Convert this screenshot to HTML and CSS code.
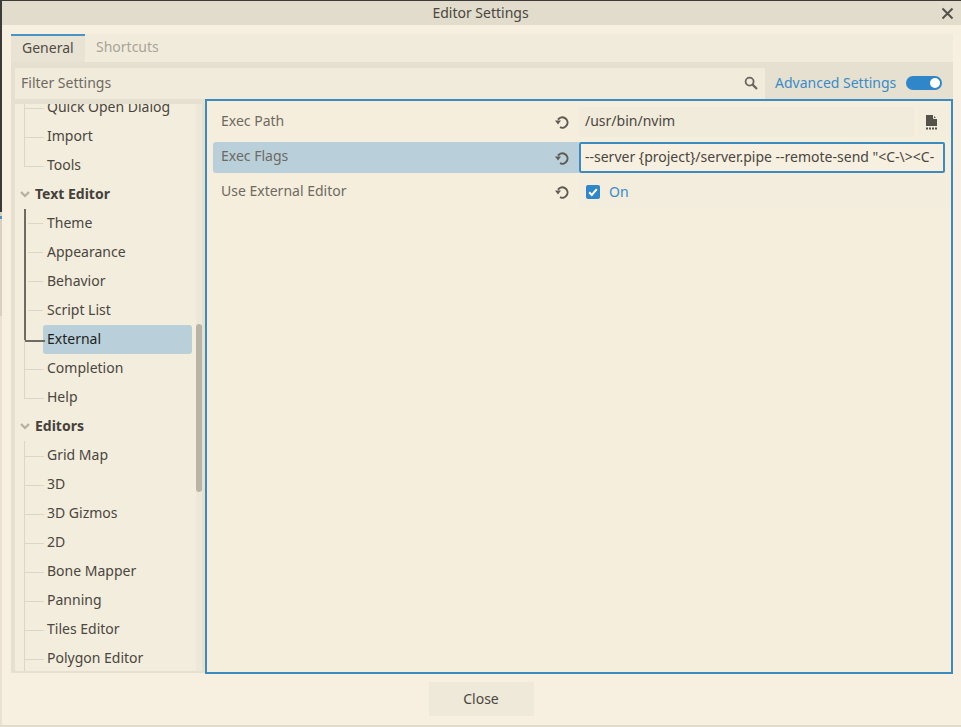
FILE: index.html
```html
<!DOCTYPE html>
<html>
  <head>
    <title>Editor Settings</title>
    <link rel="stylesheet" href="styles.css">
  </head>

  <body>
    <div class="window">
      <div class="titlebar">
        Editor Settings
        <svg class="close-x" width="13" height="13" viewBox="0 0 13 13">
          <path d="M1.5 1.5 L11.5 11.5 M11.5 1.5 L1.5 11.5" stroke="#55524c" stroke-width="2" fill="none" />
        </svg>
      </div>

      <div class="content">
        <div class="tabs">
          <div class="tab active">General</div>
          <div class="tab">Shortcuts</div>
        </div>

        <div class="panel">
          <div class="filter-row">
            <div class="filter-input">
              <span>Filter Settings</span>
              <svg width="14" height="14" viewBox="0 0 14 14">
                <circle cx="5.6" cy="5.6" r="4" stroke="#6a665e" stroke-width="1.8" fill="none" />
                <path d="M8.6 8.6 L13 13" stroke="#6a665e" stroke-width="2.2" fill="none" />
              </svg>
            </div>
            <div class="advanced">
              <span>Advanced Settings</span>
              <div class="toggle"><div class="knob"></div></div>
            </div>
          </div>

          <div class="split">
            <div class="tree-wrap">
              <div class="tree">
                <div class="tree-item">Quick Open Dialog</div>
                <div class="tree-item">Import</div>
                <div class="tree-item last">Tools</div>
                <div class="tree-head">
                  <svg width="10" height="7" viewBox="0 0 10 7"><path d="M1 1 L5 5 L9 1" stroke="#b5b0a3" stroke-width="2.2" fill="none" /></svg>
                  Text Editor
                </div>
                <div class="tree-item strong">Theme</div>
                <div class="tree-item strong">Appearance</div>
                <div class="tree-item strong">Behavior</div>
                <div class="tree-item strong">Script List</div>
                <div class="tree-item selected">External</div>
                <div class="tree-item">Completion</div>
                <div class="tree-item last">Help</div>
                <div class="tree-head">
                  <svg width="10" height="7" viewBox="0 0 10 7"><path d="M1 1 L5 5 L9 1" stroke="#b5b0a3" stroke-width="2.2" fill="none" /></svg>
                  Editors
                </div>
                <div class="tree-item">Grid Map</div>
                <div class="tree-item">3D</div>
                <div class="tree-item">3D Gizmos</div>
                <div class="tree-item">2D</div>
                <div class="tree-item">Bone Mapper</div>
                <div class="tree-item">Panning</div>
                <div class="tree-item">Tiles Editor</div>
                <div class="tree-item">Polygon Editor</div>
              </div>
              <div class="scrollbar"><div class="thumb"></div></div>
            </div>

            <div class="inspector">
              <div class="prop">
                <div class="prop-label">Exec Path</div>
                <div class="revert">
                  <svg width="14" height="14" viewBox="0 0 14 14"><path d="M5 12.2 A5.2 5.2 0 1 0 3 4.6" stroke="#5f5b54" stroke-width="2" fill="none" /><path d="M0 5.5 L6 5.5 L3 9.5 Z" fill="#5f5b54" /></svg>
                </div>
                <div class="prop-value field">/usr/bin/nvim</div>
                <div class="file-btn">
                  <svg width="13" height="15" viewBox="0 0 13 15"><path d="M1 0 H8 L12 4 V11 H1 Z" fill="#55524c" /><path d="M8.5 0 V3.5 H12" stroke="#f3eddd" stroke-width="1" fill="none" /><path d="M1 13.5 H12" stroke="#55524c" stroke-width="2" stroke-dasharray="2 1" fill="none" /></svg>
                </div>
              </div>

              <div class="prop highlighted">
                <div class="prop-label">Exec Flags</div>
                <div class="revert">
                  <svg width="14" height="14" viewBox="0 0 14 14"><path d="M5 12.2 A5.2 5.2 0 1 0 3 4.6" stroke="#5f5b54" stroke-width="2" fill="none" /><path d="M0 5.5 L6 5.5 L3 9.5 Z" fill="#5f5b54" /></svg>
                </div>
                <div class="prop-value field focused">--server {project}/server.pipe --remote-send "&lt;C-\&gt;&lt;C-</div>
              </div>

              <div class="prop">
                <div class="prop-label">Use External Editor</div>
                <div class="revert">
                  <svg width="14" height="14" viewBox="0 0 14 14"><path d="M5 12.2 A5.2 5.2 0 1 0 3 4.6" stroke="#5f5b54" stroke-width="2" fill="none" /><path d="M0 5.5 L6 5.5 L3 9.5 Z" fill="#5f5b54" /></svg>
                </div>
                <div class="prop-value check-field">
                  <svg width="14" height="14" viewBox="0 0 14 14"><rect width="14" height="14" rx="2" fill="#2f86c8" /><path d="M3.2 7.2 L5.8 10 L10.8 4.2" stroke="#fff" stroke-width="2" fill="none" /></svg>
                  <span>On</span>
                </div>
              </div>
            </div>
          </div>
        </div>

        <div class="footer">
          <div class="close-btn">Close</div>
        </div>
      </div>
    </div>
  </body>
</html>
```
FILE: styles.css
```css
* {
  box-sizing: border-box;
}

html,
body {
  margin: 0;
  padding: 0;
}

body {
  font-family: "Noto Sans", sans-serif;
  font-size: 14px;
  color: #4a4640;
}

/* the 2px strip on the left is the editor showing behind the dialog */
.window {
  position: relative;
  width: 961px;
  height: 727px;
  display: flex;
  flex-direction: column;
  padding-left: 2px;
  background:
    linear-gradient(#3c3b39 0 211px, #d8d0c0 211px 215px, #4a93c4 215px 218px, #d8d0c0 218px 315px, #e9e2d2 315px) 0 0 / 2px 100% no-repeat,
    #f7f0e0;
  border-top: 1px solid #3c3b39;
  border-bottom: 2px solid #e2dccc;
  overflow: hidden;
}

.titlebar {
  height: 24px;
  flex: none;
  line-height: 23px;
  text-align: center;
  padding-right: 2px;
  background-color: #e2dccc;
  color: #4a4640;
}

.close-x {
  position: absolute;
  top: 6px;
  right: 7px;
}

.content {
  flex: 1;
  display: flex;
  flex-direction: column;
  padding: 9px 8px 0 9px;
}

.tabs {
  display: flex;
  height: 28px;
  flex: none;
  background-color: #f1ebdb;
}

.tab {
  padding: 0 11px;
  line-height: 26px;
  color: #a8a498;
}

.tab.active {
  width: 74px;
  background-color: #e9e3d4;
  border-top: 2px solid #4a93c4;
  line-height: 24px;
  color: #4f4b45;
}

.panel {
  height: 611px;
  flex: none;
  background-color: #e6e0d1;
  padding: 6px 0 0 4px;
}

.filter-row {
  display: flex;
  height: 31px;
  flex: none;
  padding-bottom: 2px;
}

.filter-input {
  width: 750px;
  display: flex;
  align-items: center;
  justify-content: space-between;
  padding: 0 7px 0 6px;
  background-color: #f1ebdb;
  color: #6e6a62;
  box-shadow: 0 2px 0 #f1ebdb;
}

.advanced {
  flex: 1;
  display: flex;
  align-items: center;
  padding-left: 10px;
  color: #3a8cc6;
}

.toggle {
  width: 36px;
  height: 14px;
  margin-left: 10px;
  border-radius: 7px;
  background-color: #2f86c8;
  display: flex;
  justify-content: flex-end;
  align-items: center;
  padding-right: 2px;
}

.knob {
  width: 10px;
  height: 10px;
  border-radius: 50%;
  background-color: #fff;
}

.split {
  display: flex;
  gap: 3px;
}

.tree-wrap {
  position: relative;
  width: 187px;
  height: 567px;
  margin-top: 5px;
  background-color: #f3eddd;
  overflow: hidden;
}

.tree {
  margin-top: -11px;
}

.tree-item,
.tree-head {
  position: relative;
  height: 29px;
  line-height: 28px;
}

.tree-item {
  padding-left: 32px;
  width: 177px;
}

.tree-item::before {
  content: "";
  position: absolute;
  left: 9px;
  top: 0;
  width: 19px;
  height: 15px;
  border-left: 1px solid #dcd6c6;
  border-bottom: 1px solid #dcd6c6;
}

.tree-item::after {
  content: "";
  position: absolute;
  left: 9px;
  top: 15px;
  height: 14px;
  border-left: 1px solid #dcd6c6;
}

.tree-item.last::after {
  display: none;
}

/* the branch of the selected row is drawn darker */
.tree-item.strong {
  background: linear-gradient(#dcd6c6, #dcd6c6) 13px 14px / 15px 1px no-repeat;
}

.tree-item.strong::before {
  border-left: 2px solid #6f6a62;
  border-bottom: none;
}

.tree-item.strong::after {
  border-left: 2px solid #6f6a62;
}

.tree-item.selected {
  width: 149px;
  margin-left: 28px;
  padding-left: 4px;
  border-radius: 3px;
  background-color: #b9d0da;
  color: #1f1e1c;
}

.tree-item.selected::before {
  left: -19px;
  border-left: 2px solid #6f6a62;
  border-bottom: 2px solid #6f6a62;
}

.tree-item.selected::after {
  left: -19px;
}

.tree-head {
  padding-left: 20px;
  font-weight: 700;
  color: #45413b;
}

.tree-head svg {
  position: absolute;
  left: 5px;
  top: 11px;
}

.scrollbar {
  position: absolute;
  top: 0;
  bottom: 0;
  right: 0;
  width: 6px;
  background-color: #eee8d9;
}

.thumb {
  width: 6px;
  height: 168px;
  margin-top: 220px;
  border-radius: 3px;
  background-color: #b9b4a6;
}

.inspector {
  width: 748px;
  height: 575px;
  background-color: #f5eedd;
  border: 2px solid #3c8bc0;
  padding: 6px 6px 0 6px;
  display: flex;
  flex-direction: column;
  gap: 5px;
}

.prop {
  display: flex;
  height: 30px;
  align-items: stretch;
}

.prop-label {
  width: 326px;
  padding-left: 8px;
  line-height: 27px;
  color: #6e6a62;
  border-radius: 3px 0 0 3px;
}

.revert {
  width: 40px;
  display: flex;
  align-items: center;
  padding-left: 16px;
}

.prop-value {
  flex: 1;
  line-height: 28px;
  padding-left: 6px;
  white-space: nowrap;
  overflow: hidden;
}

.field {
  background-color: #f1ebdb;
}

.field.focused {
  background-color: #f7f0e0;
  border: 2px solid #3c8bc0;
  border-radius: 2px;
  padding-left: 4px;
  line-height: 26px;
}

.file-btn {
  width: 27px;
  margin-left: 4px;
  display: flex;
  align-items: center;
  justify-content: center;
  background-color: #f3eddd;
}

.highlighted .prop-label,
.highlighted .revert {
  background-color: #b9d0da;
}

.highlighted {
  height: 31px;
  margin-bottom: -1px;
}

.check-field {
  display: flex;
  align-items: center;
  gap: 9px;
  padding-left: 7px;
  background-color: #f3eddd;
  color: #3a8cc6;
}

.footer {
  display: flex;
  justify-content: center;
  padding: 9px 2px 0 0;
}

.close-btn {
  width: 105px;
  height: 34px;
  line-height: 33px;
  text-align: center;
  background-color: #efe9da;
  color: #4a4640;
}
```
